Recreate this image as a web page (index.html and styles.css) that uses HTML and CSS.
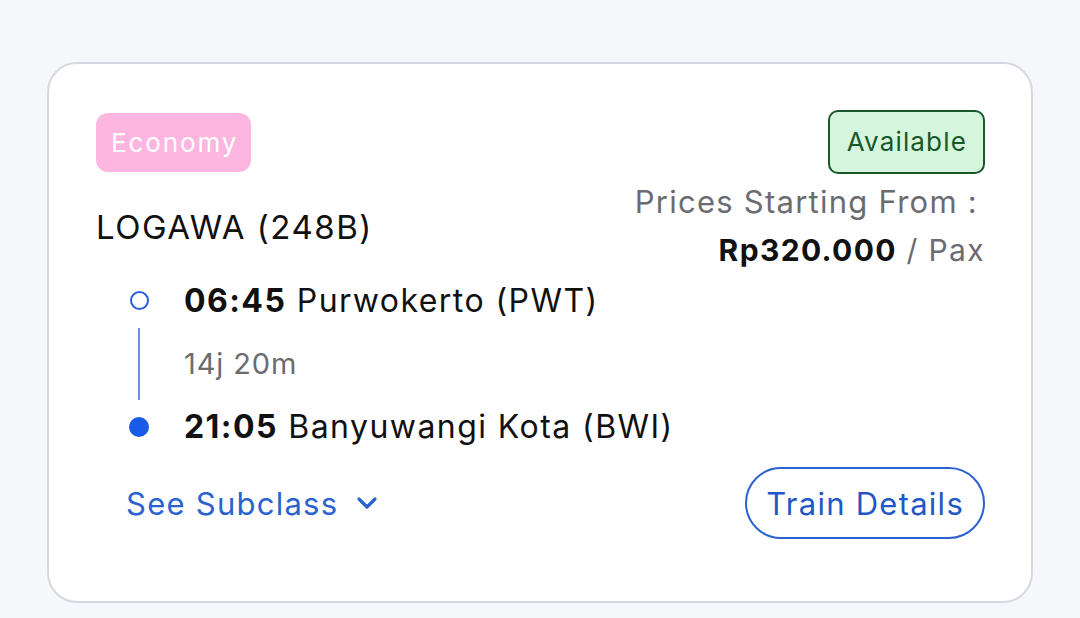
FILE: index.html
```html
<!DOCTYPE html>
<html>
<head>
<meta charset="utf-8">
<link rel="stylesheet" href="styles.css">
</head>
<body>
<div class="card">
  <div class="top">
    <div class="left">
      <span class="badge-economy">Economy</span>
      <div class="train-name">LOGAWA (248B)</div>
    </div>
    <div class="right">
      <span class="badge-available">Available</span>
      <div class="price-label">Prices Starting From :</div>
      <div class="price"><b>Rp320.000</b> / Pax</div>
    </div>
  </div>
  <div class="route">
    <div class="stop">
      <div class="marker"><span class="dot-open"></span></div>
      <div class="stop-text"><b>06:45</b> Purwokerto (PWT)</div>
    </div>
    <div class="stop">
      <div class="marker"><span class="line"></span></div>
      <div class="duration">14j 20m</div>
    </div>
    <div class="stop">
      <div class="marker"><span class="dot-fill"></span></div>
      <div class="stop-text"><b>21:05</b> Banyuwangi Kota (BWI)</div>
    </div>
  </div>
  <div class="bottom">
    <div class="subclass">See Subclass
      <svg class="chev" width="22" height="14" viewBox="0 0 22 14"><path d="M3 3 L11 11 L19 3" fill="none" stroke="#2a62d0" stroke-width="3.2" stroke-linecap="round" stroke-linejoin="round"/></svg>
    </div>
    <button class="details">Train Details</button>
  </div>
</div>
</body>
</html>
```
FILE: styles.css
```css
* { box-sizing: border-box; }
html, body { margin: 0; padding: 0; }
body {
  background: #f6f7fb;
  font-family: "Inter", "Liberation Sans", sans-serif;
  letter-spacing: 0.055em;
  width: 1080px;
  height: 618px;
  padding: 62px 47px 0 47px;
}
.card {
  width: 986px;
  height: 541px;
  background: #fff;
  border: 2px solid #d6d7e1;
  border-radius: 30px;
  padding: 49px 46px 0 47px;
}
.top {
  display: flex;
  justify-content: space-between;
}
.left { display: flex; flex-direction: column; align-items: flex-start; }
.badge-economy {
  background: #fcb6df;
  color: #fff;
  font-size: 26px;
  letter-spacing: 1.9px;
  padding: 0 13px 0 15px;
  height: 59px;
  line-height: 59px;
  border-radius: 12px;
}
.train-name {
  margin-top: 35px;
  font-size: 33px;
  letter-spacing: 0.045em;
  color: #111;
}
.right { display: flex; flex-direction: column; align-items: flex-end; margin-top: -3px; }
.badge-available {
  background: #d5f5dc;
  border: 2px solid #17572a;
  color: #17572a;
  font-size: 26px;
  letter-spacing: 0.045em;
  height: 64px;
  line-height: 60px;
  padding: 0 16px 0 17px;
  border-radius: 10px;
}
.price-label {
  margin-top: 8px;
  font-size: 31px;
  letter-spacing: 1.25px;
  color: #6b6b71;
  padding-right: 7px;
  line-height: 40px;
}
.price {
  font-size: 30px;
  letter-spacing: 0.045em;
  color: #6b6b71;
  line-height: 58px;
  margin-top: -1px;
}
.price b { color: #111; font-weight: 700; }
.route {
  margin-top: -10px;
  padding-left: 15px;
  display: flex;
  flex-direction: column;
}
.stop { display: flex; align-items: center; height: 63px; gap: 17px; }
.marker { width: 56px; display: flex; justify-content: center; align-items: center; height: 100%; }
.dot-open { width: 19px; height: 19px; border: 2px solid #2a5fd8; border-radius: 50%; }
.dot-fill { width: 20px; height: 20px; background: #1a5ae8; border-radius: 50%; }
.line { width: 2px; height: 72px; background: #6e8ee2; }
.stop-text { font-size: 32px; color: #111; letter-spacing: 0.045em; }
.stop-text b { font-weight: 700; }
.duration { font-size: 29px; color: #6b6b71; }
.bottom {
  margin-top: 9px;
  display: flex;
  justify-content: space-between;
  align-items: center;
  padding-left: 30px;
}
.subclass {
  color: #2a62d0;
  font-size: 31px;
  letter-spacing: 1.25px;
  display: flex;
  align-items: center;
  gap: 18px;
}
.details {
  background: #fff;
  border: 2px solid #2a62d0;
  color: #1f58c6;
  font-family: inherit;
  letter-spacing: 1.25px;
  font-size: 31px;
  height: 72px;
  padding: 0 19px;
  border-radius: 36px;
}
```
